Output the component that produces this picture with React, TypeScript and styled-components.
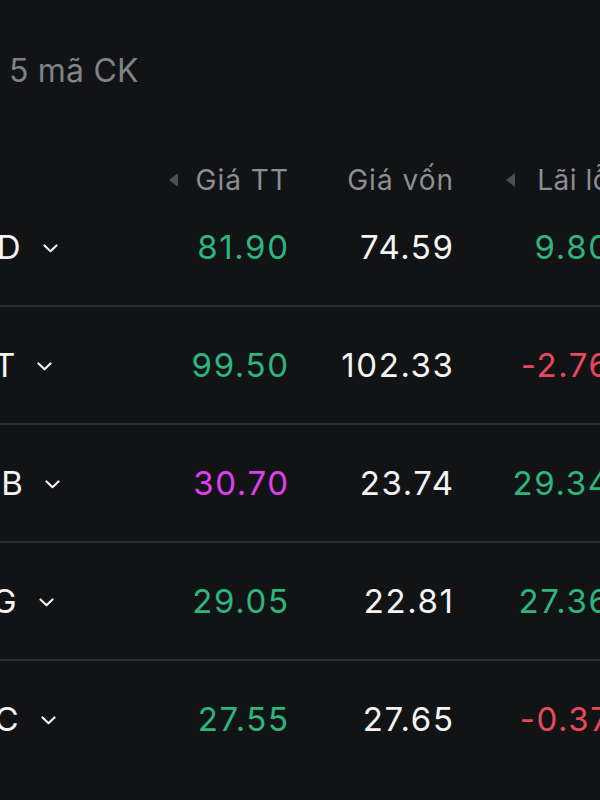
import React from "react";
import styled, { createGlobalStyle } from "styled-components";

const GlobalStyle = createGlobalStyle`
  html, body {
    margin: 0;
    padding: 0;
    background: #111315;
    overflow: hidden;
  }
  body {
    font-family: Inter, "Noto Sans", "Liberation Sans", sans-serif;
    -webkit-font-smoothing: antialiased;
  }
`;

const Screen = styled.div`
  width: 600px;
  height: 800px;
  overflow: hidden;
  background: #111315;
`;

const Title = styled.div`
  padding: 51px 0 0 9px;
  height: 40px;
  line-height: 40px;
  font-size: 32px;
  color: #7f8286;
  letter-spacing: 0.2px;
`;

const Table = styled.div`
  margin-left: -49px;
  width: 660px;
`;

const cols = "219px 118px 165px 156px";

const HeaderRow = styled.div`
  display: grid;
  grid-template-columns: ${cols};
  padding-top: 79px;
  height: 20px;
  line-height: 20px;
  font-size: 28px;
  letter-spacing: 1px;
  color: #8b8e92;
  margin-bottom: -1px;
`;

const HeaderCell = styled.div<{ $gap?: number; $tight?: boolean }>`
  display: flex;
  align-items: center;
  justify-content: flex-end;
  gap: ${(p) => p.$gap ?? 18}px;
  white-space: nowrap;
  margin-right: -1px;
  letter-spacing: ${(p) => (p.$tight ? "0.5px" : "1px")};
`;

const SortMark = styled.span`
  width: 0;
  height: 0;
  border-top: 7px solid transparent;
  border-bottom: 7px solid transparent;
  border-right: 9px solid #4b4e52;
`;

const Row = styled.div`
  display: grid;
  grid-template-columns: ${cols};
  align-items: center;
  height: 116px;
  border-bottom: 2px solid #2a2c2f;
  &:last-child {
    border-bottom: none;
  }
`;

const SymbolCell = styled.div`
  display: flex;
  align-items: center;
  gap: 21px;
  font-size: 33px;
  letter-spacing: 1px;
  color: #f4f4f4;
  white-space: nowrap;
`;

const Chevron = styled.svg`
  width: 15px;
  height: 9px;
  margin-top: 2px;
`;

const Value = styled.div<{ $color: string }>`
  text-align: right;
  font-size: 33px;
  letter-spacing: 1.6px;
  margin-right: -1.6px;
  color: ${(p) => p.$color};
  white-space: nowrap;
`;

const C = {
  up: "#2cb67d",
  down: "#e8485c",
  ceil: "#e03ef0",
  ref: "#f4f4f4",
};

type Item = {
  sym: string;
  price: string;
  pColor: string;
  cost: string;
  pnl: string;
  pnlColor: string;
};

const data: Item[] = [
  { sym: "PVD", price: "81.90", pColor: C.up, cost: "74.59", pnl: "9.80", pnlColor: C.up },
  { sym: "SBT", price: "99.50", pColor: C.up, cost: "102.33", pnl: "-2.76", pnlColor: C.down },
  { sym: "HDB", price: "30.70", pColor: C.ceil, cost: "23.74", pnl: "29.34", pnlColor: C.up },
  { sym: "TLG", price: "29.05", pColor: C.up, cost: "22.81", pnl: "27.36", pnlColor: C.up },
  { sym: "STC", price: "27.55", pColor: C.up, cost: "27.65", pnl: "-0.37", pnlColor: C.down },
];

const ChevronDown = () => (
  <Chevron viewBox="0 0 15 9" fill="none">
    <path d="M1.5 1.5 L7.5 7.2 L13.5 1.5" stroke="#f4f4f4" strokeWidth="2.2" strokeLinecap="round" strokeLinejoin="round" />
  </Chevron>
);

export default function App() {
  return (
    <Screen>
      <GlobalStyle />
      <Title>5 mã CK</Title>
      <Table>
        <HeaderRow>
          <div />
          <HeaderCell>
            <SortMark />
            <span>Giá TT</span>
          </HeaderCell>
          <HeaderCell>
            <span>Giá vốn</span>
          </HeaderCell>
          <HeaderCell $gap={22} $tight>
            <SortMark />
            <span>Lãi lỗ</span>
          </HeaderCell>
        </HeaderRow>
        {data.map((d) => (
          <Row key={d.sym}>
            <SymbolCell>
              <span>{d.sym}</span>
              <ChevronDown />
            </SymbolCell>
            <Value $color={d.pColor}>{d.price}</Value>
            <Value $color={C.ref}>{d.cost}</Value>
            <Value $color={d.pnlColor}>{d.pnl}</Value>
          </Row>
        ))}
      </Table>
    </Screen>
  );
}
